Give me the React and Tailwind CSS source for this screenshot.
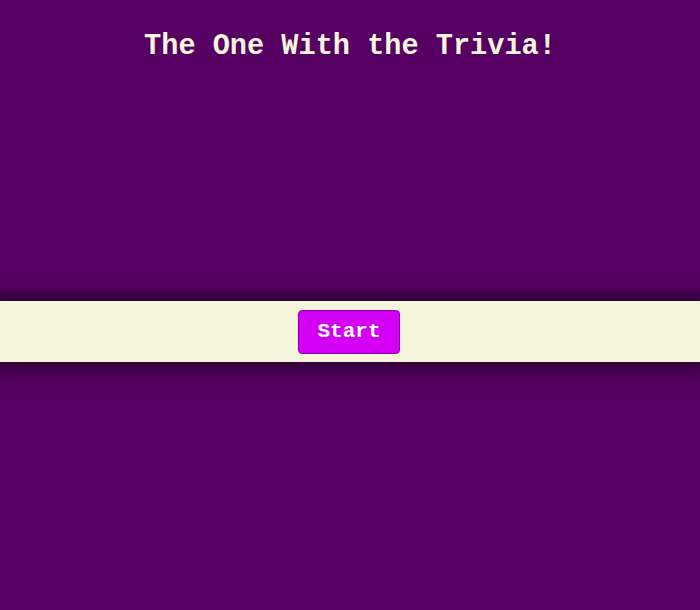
import React from 'react';

export default function App() {
  return (
    <div className="min-h-[610px] bg-[#550062] overflow-hidden" style={{ fontFamily: '"Courier New", "Liberation Mono", monospace' }}>
      {/* Title */}
      <h1 className="pt-[31px] text-center text-[28.6px] leading-[32px] font-bold text-[#f5f5dc]">
        The One With the Trivia!
      </h1>

      {/* Start bar */}
      <div className="mt-[238px] h-[61px] bg-[#f5f5dc] shadow-[0_0_14px_6px_rgba(0,0,0,0.55)] flex items-center justify-center">
        <button className="w-[102px] h-[44px] -ml-[2px] rounded-[4px] bg-[#d400f5] border border-[#8e00a8] text-white text-[21px] font-bold">
          Start
        </button>
      </div>
    </div>
  );
}
